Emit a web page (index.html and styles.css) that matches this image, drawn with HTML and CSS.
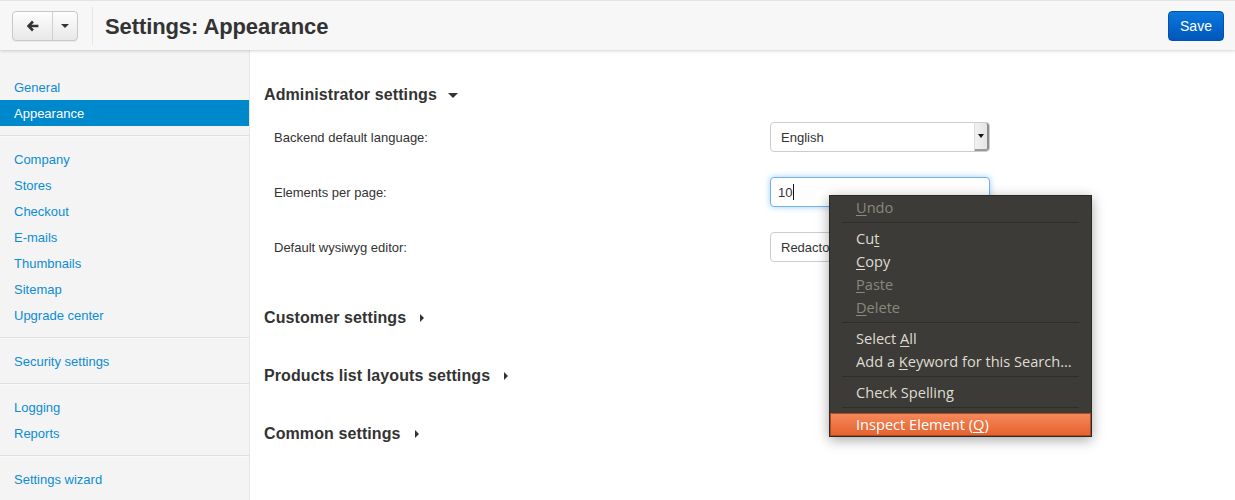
FILE: index.html
```html
<!DOCTYPE html>
<html>
<head>
<meta charset="utf-8">
<link rel="stylesheet" href="styles.css">
</head>
<body>
<header class="header">
  <div class="btn-group">
    <span class="btn btn-back">
      <svg width="13" height="12" viewBox="0 0 13 12"><path d="M6 0.6 L0.8 6 L6 11.4 L7.9 9.6 L5.6 7.3 H12.4 V4.7 H5.6 L7.9 2.4 Z" fill="#333"/></svg>
    </span>
    <span class="btn btn-caret"><span class="tri-down small"></span></span>
  </div>
  <div class="vdiv"></div>
  <h1 class="title">Settings: Appearance</h1>
  <span class="btn-save">Save</span>
</header>
<div class="main">
  <nav class="sidebar">
    <ul class="nav-group">
      <li><a>General</a></li>
      <li class="active"><a>Appearance</a></li>
    </ul>
    <ul class="nav-group">
      <li><a>Company</a></li>
      <li><a>Stores</a></li>
      <li><a>Checkout</a></li>
      <li><a>E-mails</a></li>
      <li><a>Thumbnails</a></li>
      <li><a>Sitemap</a></li>
      <li><a>Upgrade center</a></li>
    </ul>
    <ul class="nav-group">
      <li><a>Security settings</a></li>
    </ul>
    <ul class="nav-group">
      <li><a>Logging</a></li>
      <li><a>Reports</a></li>
    </ul>
    <ul class="nav-group">
      <li><a>Settings wizard</a></li>
    </ul>
  </nav>
  <section class="content">
    <h2 class="sec-title">Administrator settings <span class="tri-down"></span></h2>
    <div class="form">
      <div class="row">
        <label>Backend default language:</label>
        <div class="select"><span>English</span><span class="sel-btn"><span class="tri-down tiny"></span></span></div>
      </div>
      <div class="row">
        <label>Elements per page:</label>
        <div class="input focus"><span>10</span><span class="cursor"></span></div>
      </div>
      <div class="row">
        <label>Default wysiwyg editor:</label>
        <div class="select"><span>Redactor</span></div>
      </div>
    </div>
    <div class="closed-list">
      <h2 class="sec-title">Customer settings <span class="tri-right"></span></h2>
      <h2 class="sec-title">Products list layouts settings <span class="tri-right"></span></h2>
      <h2 class="sec-title">Common settings <span class="tri-right"></span></h2>
    </div>
  </section>
</div>
<div class="ctx-menu">
  <div class="mi disabled"><u>U</u>ndo</div>
  <div class="msep"></div>
  <div class="mi">Cu<u>t</u></div>
  <div class="mi"><u>C</u>opy</div>
  <div class="mi disabled"><u>P</u>aste</div>
  <div class="mi disabled"><u>D</u>elete</div>
  <div class="msep"></div>
  <div class="mi">Select <u>A</u>ll</div>
  <div class="mi">Add a <u>K</u>eyword for this Search…</div>
  <div class="msep"></div>
  <div class="mi">Check Spellin<u>g</u></div>
  <div class="msep"></div>
  <div class="mi hover">Inspect Element (<u>Q</u>)</div>
</div>
</body>
</html>
```
FILE: styles.css
```css
* { box-sizing: border-box; }
html, body { margin: 0; padding: 0; }
body {
  font-family: "Liberation Sans", Arial, sans-serif;
  font-size: 13px;
  color: #333;
  background: #fff;
  width: 1235px;
  height: 500px;
  overflow: hidden;
  position: relative;
}
.header {
  height: 50px;
  display: flex;
  align-items: center;
  padding: 1px 11px 0 12px;
  background: #f7f7f7;
  border-top: 1px solid #e4e4e4;
  box-shadow: 0 1px 3px rgba(0,0,0,0.18);
  position: relative;
  z-index: 2;
}
.btn-group {
  display: flex;
  height: 30px;
  border: 1px solid #c8c8c8;
  border-radius: 4px;
  background: linear-gradient(#fdfdfd, #e8e8e8);
  box-shadow: 0 1px 1px rgba(0,0,0,0.06);
}
.btn { display: flex; align-items: center; justify-content: center; }
.btn-back { width: 40px; border-right: 1px solid #cfcfcf; }
.btn-caret { width: 24px; }
.tri-down {
  display: inline-block;
  width: 0; height: 0;
  border-left: 5px solid transparent;
  border-right: 5px solid transparent;
  border-top: 5px solid #333;
  vertical-align: middle;
}
.tri-down.small { border-left-width: 4px; border-right-width: 4px; border-top-width: 4px; }
.tri-down.tiny { border-left-width: 3px; border-right-width: 3px; border-top-width: 4px; border-top-color: #111; }
.tri-right {
  display: inline-block;
  width: 0; height: 0;
  border-top: 4px solid transparent;
  border-bottom: 4px solid transparent;
  border-left: 4px solid #333;
  vertical-align: middle;
}
.vdiv { width: 1px; height: 38px; background: #e6e6e6; margin-left: 14px; }
.title {
  margin: 2px 0 0 12px;
  font-size: 22px;
  font-weight: bold;
  color: #333;
  flex: 1;
  letter-spacing: -0.1px;
}
.btn-save {
  width: 56px;
  height: 30px;
  display: flex;
  align-items: center;
  justify-content: center;
  color: #fff;
  font-size: 14px;
  border: 1px solid #0453a8;
  border-radius: 4px;
  background: linear-gradient(#0b77dc, #0057bb);
}
.main { display: flex; height: 450px; }
.sidebar {
  width: 250px;
  background: #f4f4f4;
  border-right: 1px solid #e6e6e6;
  padding-top: 14px;
  flex-shrink: 0;
}
.nav-group {
  list-style: none;
  margin: 0;
  padding: 10px 0 9px;
  border-bottom: 1px solid #e0e0e0;
  box-shadow: 0 1px 0 #fafafa;
}
.nav-group:last-child { border-bottom: none; box-shadow: none; }
.nav-group li { height: 26px; display: flex; align-items: center; padding-left: 14px; }
.nav-group li a { color: #0b8cd4; font-size: 13px; }
.nav-group li.active { background: #0088cc; }
.nav-group li.active a { color: #fff; }
.content { flex: 1; padding: 35px 0 0 14px; }
.sec-title {
  margin: 0;
  font-size: 16px;
  font-weight: bold;
  line-height: 20px;
  letter-spacing: 0.1px;
  color: #333;
  display: flex;
  align-items: center;
}
.sec-title .tri-down { margin-left: 11px; margin-top: 1px; }
.sec-title .tri-right { margin-left: 14px; }
.closed-list { display: flex; flex-direction: column; gap: 38px; padding-top: 46px; }
.form { padding: 17px 0 0 10px; display: flex; flex-direction: column; gap: 25px; }
.row { display: grid; grid-template-columns: 496px 220px; align-items: center; height: 30px; }
.row label { font-size: 13px; color: #333; }
.select, .input {
  height: 30px;
  border: 1px solid #cccccc;
  border-radius: 4px;
  display: flex;
  align-items: center;
  padding-left: 10px;
  font-size: 13px;
  color: #333;
  background: #fff;
  position: relative;
}
.input { padding-left: 7px; }
.input.focus {
  border-color: #72b3ec;
  box-shadow: 0 0 6px rgba(102,175,233,0.6);
}
.cursor { display: inline-block; width: 1px; height: 16px; background: #111; margin-left: 1px; }
.sel-btn {
  position: absolute;
  right: 0; top: 0;
  width: 15px; height: 28px;
  background: linear-gradient(90deg, #f2f2f2, #e4e4e4);
  border-left: 1px solid #dcdcdc;
  border-right: 2px solid #8e8e8e;
  border-bottom: 2px solid #9a9a9a;
  border-radius: 0 3px 3px 0;
  display: flex;
  align-items: center;
  justify-content: center;
}
.ctx-menu {
  position: absolute;
  left: 829px;
  top: 195px;
  width: 263px;
  background: #3c3b37;
  border: 1px solid #2a2926;
  padding: 0;
  box-shadow: 0 3px 12px rgba(0,0,0,0.35);
  font-family: "Open Sans", "Noto Sans", sans-serif;
  font-size: 14.6px;
  color: #dfdbd2;
  z-index: 10;
}
.mi { height: 23px; line-height: 23px; padding-left: 26px; white-space: nowrap; }
.mi u { text-decoration-thickness: 1px; text-underline-offset: 2px; }
.mi.disabled { color: #8a877f; }
.msep { height: 8px; margin: 0 12px; position: relative; }
.msep::after { content: ""; position: absolute; left: 0; right: 0; top: 3px; height: 1px; background: #2e2d2a; }
.mi.hover {
  background: linear-gradient(#f5885a, #e5622f);
  border: 1px solid #b04a20;
  color: #fff;
  padding-left: 25px;
  line-height: 21px;
  margin-top: 1px;
}
```
